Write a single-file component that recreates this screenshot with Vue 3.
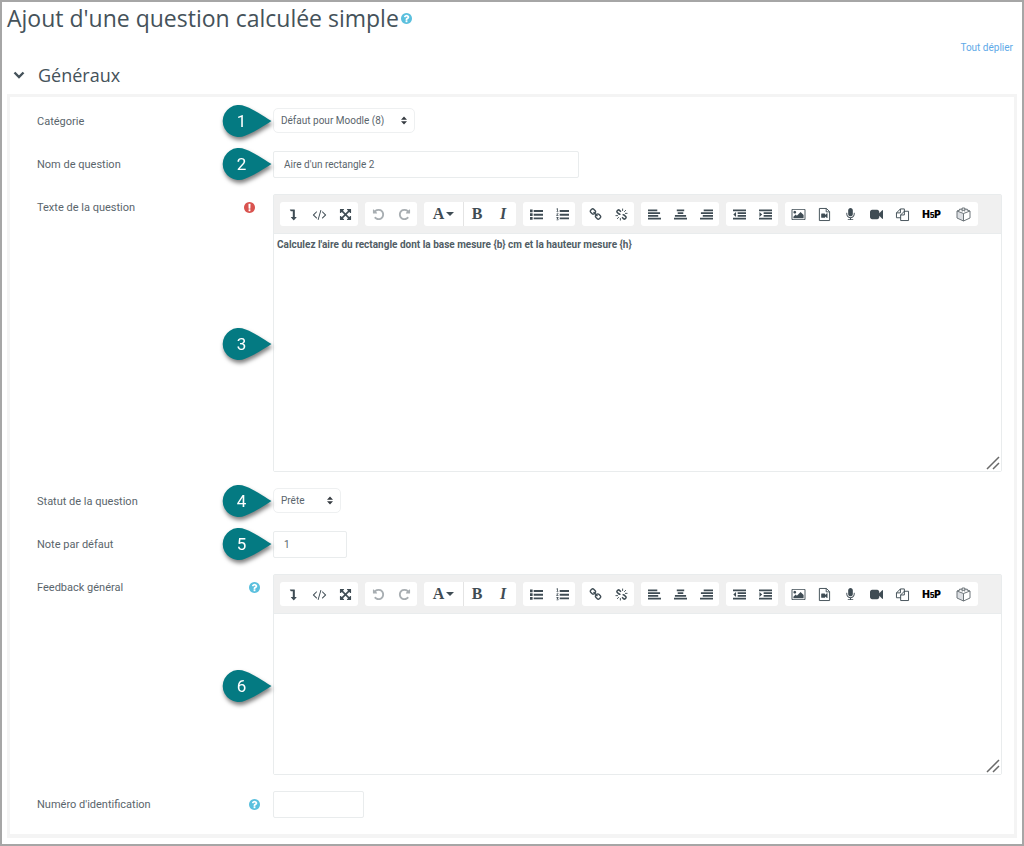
<script setup>
import { ref } from 'vue'

const category = ref('Défaut pour Moodle (8)')
const name = ref("Aire d'un rectangle 2")
const questionText = ref("Calculez l'aire du rectangle dont la base mesure {b} cm et la hauteur mesure {h}")
const status = ref('Prête')
const mark = ref('1')
const feedback = ref('')
const idNumber = ref('')
const open = ref(true)

const HELP = 'M1024 1376v-192q0-14-9-23t-23-9h-192q-14 0-23 9t-9 23v192q0 14 9 23t23 9h192q14 0 23-9t9-23zm256-672q0-88-55.5-163t-138.5-116-170-41q-243 0-371 213-15 24 8 42l132 100q7 6 19 6 16 0 25-12 53-68 86-92 34-24 86-24 48 0 85.5 26t37.5 59q0 38-20 61t-68 45q-63 28-115.5 86.5t-52.5 125.5v36q0 14 9 23t23 9h192q14 0 23-9t9-23q0-19 21.5-49.5t54.5-49.5q32-18 49-28.5t46-35 44.5-48 28-60.5 12.5-81zm384 192q0 209-103 385.5t-279.5 279.5-385.5 103-385.5-103-279.5-279.5-103-385.5 103-385.5 279.5-279.5 385.5-103 385.5 103 279.5 279.5 103 385.5z'
const REQUIRED = 'M896 128q209 0 385.5 103t279.5 279.5 103 385.5-103 385.5-279.5 279.5-385.5 103-385.5-103-279.5-279.5-103-385.5 103-385.5 279.5-279.5 385.5-103zm128 1247v-190q0-14-9-23.5t-22-9.5h-192q-13 0-23 10t-10 23v190q0 13 10 23t23 10h192q13 0 22-9.5t9-23.5zm-2-344l18-621q0-12-10-18-10-8-24-8h-220q-14 0-24 8-10 6-10 18l17 621q0 10 10 17.5t24 7.5h185q14 0 23.5-7.5t10.5-17.5z'
const REDO = 'M1664 256v448q0 26-19 45t-45 19h-448q-42 0-59-40-17-39 14-69l138-138q-148-137-349-137-104 0-198.5 40.5t-163.5 109.5-109.5 163.5-40.5 198.5 40.5 198.5 109.5 163.5 163.5 109.5 198.5 40.5q119 0 225-52t179-147q7-10 23-12 15 0 25 9l137 138q9 8 9.5 20.5t-7.5 22.5q-109 132-264 204.5t-327 72.5q-156 0-298-61t-245-164-164-245-61-298 61-298 164-245 245-164 298-61q147 0 284.5 55.5t244.5 156.5l130-129q29-31 70-14 39 17 39 59z'

const ICONS = {
  toggle: { d: 'M420 192h600q60 0 60 60v976h230q50 0 20 50l-370 410q-30 34-60 0l-370-410q-30-50 20-50h250v-776h-230q-20 0-34-16l-150-180q-20-44 34-64z' },
  html: { d: 'M553 1399l-50 50q-10 10-23 10t-23-10l-466-466q-10-10-10-23t10-23l466-466q10-10 23-10t23 10l50 50q10 10 10 23t-10 23l-393 393 393 393q10 10 10 23t-10 23zm591-1067l-373 1291q-4 13-15.5 19.5t-23.5 2.5l-62-17q-13-4-19.5-15.5t-2.5-24.5l373-1291q4-13 15.5-19.5t23.5-2.5l62 17q13 4 19.5 15.5t2.5 24.5zm657 651l-466 466q-10 10-23 10t-23-10l-50-50q-10-10-10-23t10-23l393-393-393-393q-10-10-10-23t10-23l50-50q10-10 23-10t23 10l466 466q10 10 10 23t-10 23z' },
  expand: { d: 'M1411 541l-355 355 355 355 144-144q29-31 70-14 39 17 39 59v448q0 26-19 45t-45 19h-448q-42 0-59-40-17-39 14-69l144-144-355-355-355 355 144 144q31 30 14 69-17 40-59 40h-448q-26 0-45-19t-19-45v-448q0-42 40-59 39-17 69 14l144 144 355-355-355-355-144 144q-19 19-45 19-12 0-24-5-40-17-40-59v-448q0-26 19-45t45-19h448q42 0 59 40 17 39-14 69l-144 144 355 355 355-355-144-144q-31-30-14-69 17-40 59-40h448q26 0 45 19t19 45v448q0 42-39 59-13 5-25 5-26 0-45-19z' },
  undo: { d: REDO, flip: true },
  redo: { d: REDO },
  bullets: { d: 'M0 220h360v360h-360zM0 732h360v360h-360zM0 1244h360v360h-360zM512 280h1280v260h-1280zM512 792h1280v260h-1280zM512 1304h1280v260h-1280z' },
  numbers: { d: 'M512 280h1280v260h-1280zM512 792h1280v260h-1280zM512 1304h1280v260h-1280zM60 110l120-60h70v400h90v80h-290v-80h90v-280l-80 40zM50 720q140-120 260-30 80 110-60 220l-70 60h160v90h-310v-80l200-190q30-70-30-80-50 0-90 50zM50 1250h290v80l-100 110q110 20 110 130-10 130-170 130-90 0-140-50l40-80q60 50 110 40 60-10 50-60-20-50-130-40v-70l90-100h-150z' },
  link: { d: 'M1520 1216q0-40-28-68l-208-208q-28-28-68-28-42 0-72 32 3 3 19 18.5t21.5 21.5 15 19 13 25.5 3.5 27.5q0 40-28 68t-68 28q-15 0-27.5-3.5t-25.5-13-19-15-21.5-21.5-18.5-19q-33 31-33 73 0 40 28 68l206 207q27 27 68 27 40 0 68-26l147-146q28-28 28-67zm-703-705q0-40-28-68l-206-207q-28-28-68-28-39 0-68 27l-147 146q-28 28-28 67 0 40 28 68l208 208q27 27 68 27 42 0 72-31-3-3-19-18.5t-21.5-21.5-15-19-13-25.5-3.5-27.5q0-40 28-68t68-28q15 0 27.5 3.5t25.5 13 19 15 21.5 21.5 18.5 19q33-31 33-73zm895 705q0 120-85 203l-147 146q-83 83-203 83-121 0-204-85l-206-207q-83-83-83-203 0-123 88-209l-88-88q-86 88-208 88-120 0-204-84l-208-208q-84-84-84-204t85-203l147-146q83-83 203-83 121 0 204 85l206 207q83 83 83 203 0 123-88 209l88 88q86-88 208-88 120 0 204 84l208 208q84 84 84 204z' },
  unlink: { s: 'M820 520L590 290Q500 220 410 290L290 410Q220 500 290 590L520 810Q610 890 740 800M970 1270L1200 1500Q1290 1570 1380 1500L1500 1380Q1570 1290 1500 1200L1270 980Q1180 900 1050 990', thin: 'M1050 80v330M1260 530l240-240M1380 740h340M740 1390v330M530 1260l-240 240M410 1050h-340' },
  left: { d: 'M0 192h1280v256h-1280zM0 576h1664v256h-1664zM0 960h1408v256h-1408zM0 1344h1792v256h-1792z' },
  center: { d: 'M384 192h1024v256h-1024zM128 960h1536v256h-1536zM512 576h768v256h-768zM0 1344h1792v256h-1792z' },
  right: { d: 'M512 192h1280v256h-1280zM128 576h1664v256h-1664zM384 960h1408v256h-1408zM0 1344h1792v256h-1792z' },
  outdent: { d: 'M0 192h1792v256h-1792zM640 576h1152v256h-1152zM640 960h1152v256h-1152zM0 1344h1792v256h-1792zM420 560v680l-380-340z' },
  indent: { d: 'M0 192h1792v256h-1792zM640 576h1152v256h-1152zM640 960h1152v256h-1152zM0 1344h1792v256h-1792zM60 560v680l380-340z' },
  image: { d: 'M576 576q0 80-56 136t-136 56-136-56-56-136 56-136 136-56 136 56 56 136zm1024 384v448h-1408v-192l320-320 160 160 512-512zm96-704h-1600q-13 0-22.5 9.5t-9.5 22.5v1216q0 13 9.5 22.5t22.5 9.5h1600q13 0 22.5-9.5t9.5-22.5v-1216q0-13-9.5-22.5t-22.5-9.5zm160 32v1216q0 66-47 113t-113 47h-1600q-66 0-113-47t-47-113v-1216q0-66 47-113t113-47h1600q66 0 113 47t47 113z' },
  media: { d: 'M440 850q0-80 80-80h380q80 0 80 80v110l260-220h70v640h-70l-260-220v110q0 80-80 80h-380q-80 0-80-80z', thin: 'M190 64h980l430 430v1234h-1410zM1130 64v470h470' },
  mic: { d: 'M1472 704v128q0 221-147.5 384.5t-364.5 187.5v132h256q26 0 45 19t19 45-19 45-45 19h-640q-26 0-45-19t-19-45 19-45 45-19h256v-132q-217-24-364.5-187.5t-147.5-384.5v-128q0-26 19-45t45-19 45 19 19 45v128q0 185 131.5 316.5t316.5 131.5 316.5-131.5 131.5-316.5v-128q0-26 19-45t45-19 45 19 19 45zm-256-384v512q0 132-94 226t-226 94-226-94-94-226v-512q0-132 94-226t226-94 226 94 94 226z' },
  video: { d: 'M1792 352v1088q0 42-39 59-13 5-25 5-27 0-45-19l-403-403v166q0 119-84.5 203.5t-203.5 84.5h-704q-119 0-203.5-84.5t-84.5-203.5v-704q0-119 84.5-203.5t203.5-84.5h704q119 0 203.5 84.5t84.5 203.5v165l403-402q18-19 45-19 12 0 25 5 39 17 39 59z' },
  files: { thin: 'M640 1344h-576v-672l544-544h544v400M608 128v544h-544M1152 448h576v1280h-1088v-768zM1152 448v512h-512' },
}

const GROUPS = [
  ['toggle', 'html', 'expand'],
  ['undo', 'redo'],
  ['font', 'bold', 'italic'],
  ['bullets', 'numbers'],
  ['link', 'unlink'],
  ['left', 'center', 'right'],
  ['outdent', 'indent'],
  ['image', 'media', 'mic', 'video', 'files', 'h5p', 'box'],
]

const rows = [
  { id: 'category', label: 'Catégorie', n: 1, type: 'select', model: category },
  { id: 'name', label: 'Nom de question', n: 2, type: 'text', model: name },
  { id: 'text', label: 'Texte de la question', n: 3, type: 'editor', model: questionText, mark: 'required' },
  { id: 'status', label: 'Statut de la question', n: 4, type: 'select', model: status },
  { id: 'mark', label: 'Note par défaut', n: 5, type: 'text', model: mark },
  { id: 'feedback', label: 'Feedback général', n: 6, type: 'editor', model: feedback, mark: 'help' },
  { id: 'idnumber', label: "Numéro d'identification", type: 'text', model: idNumber, mark: 'help' },
]
</script>

<template>
  <main class="page">
    <h1 class="title">
      Ajout d'une question calculée simple<button class="mark help" type="button" aria-label="Aide"><svg viewBox="128 128 1536 1536"><path :d="HELP" /></svg></button>
    </h1>
    <div class="expand-all"><a href="#">Tout déplier</a></div>
    <h2 class="section-title">
      <button class="section-toggle" type="button" :aria-expanded="open" @click="open = !open">
        <svg viewBox="0 0 12 8"><path d="M1.500 1.500L6 6l4.500-4.500" /></svg>
        Généraux
      </button>
    </h2>

    <form v-show="open" class="fieldset" @submit.prevent>
      <div v-for="row in rows" :key="row.id" class="row">
        <div class="row-label">
          <label :for="row.id">{{ row.label }}</label>
          <span v-if="row.mark === 'required'" class="mark required"><svg viewBox="128 128 1536 1536"><path :d="REQUIRED" /></svg></span>
          <button v-if="row.mark === 'help'" class="mark help" type="button" aria-label="Aide"><svg viewBox="128 128 1536 1536"><path :d="HELP" /></svg></button>
        </div>

        <div class="row-control" :class="'control-' + row.type">
          <div v-if="row.type === 'select'" class="select-wrap" :class="'field-' + row.id">
            <select :id="row.id" v-model="row.model.value">
              <option>{{ row.model.value }}</option>
            </select>
            <svg class="caret" viewBox="0 0 6 8"><path d="M3 0l3 3.300H0zM3 8l3-3.300H0z" /></svg>
          </div>
          <input v-else-if="row.type === 'text'" :id="row.id" v-model="row.model.value" class="text-input" :class="'field-' + row.id" type="text" />
          <div v-else class="editor">
            <div class="toolbar">
              <div v-for="(group, g) in GROUPS" :key="g" class="group">
                <button v-for="key in group" :key="key" type="button" class="tool" :class="'tool-' + key" :aria-label="key">
                  <span v-if="key === 'font'" class="glyph">A<i class="drop"></i></span>
                  <span v-else-if="key === 'bold'" class="glyph">B</span>
                  <span v-else-if="key === 'italic'" class="glyph slanted">I</span>
                  <span v-else-if="key === 'h5p'" class="h5p">H<small>5</small>P</span>
                  <svg v-else-if="key === 'box'" class="box" viewBox="0 0 15 15">
                    <path class="side" d="M1 4l6.500 2.500v7.500L1 11z" />
                    <path d="M1 4l6.500-2.500L14 4v7l-6.500 3L1 11zM1 4l6.500 2.500L14 4M7.500 6.500V14" />
                    <path class="stud" d="M3.500 3.400V2.200h2.500v1.300M8.800 3.400V2.200h2.500v1.300M6.200 4.500V3.300h2.500v1.200M6.200 2V1h2.500v1" />
                  </svg>
                  <svg v-else class="icon" :class="{ flip: ICONS[key].flip }" viewBox="0 0 1792 1792">
                    <path v-if="ICONS[key].d" :d="ICONS[key].d" />
                    <path v-if="ICONS[key].s" class="thick" :d="ICONS[key].s" />
                    <path v-if="ICONS[key].thin" class="thin" :d="ICONS[key].thin" />
                  </svg>
                </button>
              </div>
            </div>
            <textarea :id="row.id" v-model="row.model.value" :class="'area-' + row.id"></textarea>
            <svg class="grip" viewBox="0 0 14 14"><path d="M1 13L13 1M7 13l6-6" /></svg>
          </div>
          <span v-if="row.n" class="callout"><svg viewBox="0 0 50 34"><path d="M49.500 17C40 11 31 5 23 2.300A16 16 0 1 0 23 31.700C31 29 40 23 49.500 17z" /></svg><b>{{ row.n }}</b></span>
        </div>
      </div>
    </form>
  </main>
</template>

<style>
body { background: #fff; }
</style>

<style scoped>
* { box-sizing: border-box; }
button { padding: 0; border: 0; background: none; font: inherit; color: inherit; cursor: pointer; }
svg { display: block; }
.page { border: 2px solid #a6a6a6; padding: 0 5px 6px; font-family: Roboto, "Liberation Sans", sans-serif; font-size: 11px; color: #5a656c; min-height: 100vh; }
.title { display: flex; align-items: center; gap: 2px; margin: 0; font: 400 23px/32px "Open Sans", sans-serif; color: #45525a; }
.mark { flex: none; width: 11px; height: 11px; }
.mark svg { width: 11px; height: 11px; }
.help { fill: #5bc0de; }
.required { fill: #d9534f; margin-right: 5px; }
.expand-all { text-align: right; padding: 6px 4px 0 0; font-size: 10px; line-height: 16px; }
.expand-all a { color: #5ea9e8; text-decoration: none; }
.section-title { margin: 6px 0; font: 400 18px/26px "Open Sans", sans-serif; color: #45525a; }
.section-toggle { display: flex; align-items: center; gap: 13px; padding-left: 6px; }
.section-toggle svg { width: 12px; height: 8px; fill: none; stroke: #45525a; stroke-width: 2.4; }

.fieldset { display: flex; flex-direction: column; gap: 16px; border: 3px solid #f4f4f4; border-bottom-width: 4px; padding: 11px 12px 16px 27px; }
.row { display: grid; grid-template-columns: 236px 1fr; min-height: 27px; }
.row-label { display: flex; justify-content: space-between; align-items: center; height: 27px; padding-right: 13px; }
.row-control { position: relative; }
.select-wrap { position: relative; height: 25px; }
select { appearance: none; width: 100%; height: 25px; padding: 0 7px; border: 1px solid #eef0f1; border-radius: 5px; background: #fff; font: inherit; font-size: 10px; color: inherit; }
.caret { position: absolute; right: 8px; top: 8px; width: 6px; height: 9px; fill: #343a40; pointer-events: none; }
.text-input { display: block; height: 27px; padding: 0 10px; border: 1px solid #e9eced; border-radius: 2px; background: #fff; font: inherit; font-size: 10px; color: inherit; }
.field-category { width: 142px; }
.field-status { width: 68px; }
.field-name { width: 42%; }
.field-mark { width: 74px; }
.field-idnumber { width: 91px; }

.editor { position: relative; border: 1px solid #e9eced; border-radius: 2px; }
.toolbar { display: flex; flex-wrap: wrap; gap: 7px; padding: 7px 6px; background: #f0f0f0; border-bottom: 1px solid #e9eced; }
.group { display: flex; height: 24px; background: #fff; border-radius: 3px; }
.tool { display: flex; align-items: center; justify-content: center; width: 26px; height: 24px; color: #3f4c54; }
.tool-font { width: 40px; border-right: 1px solid #e4e4e4; }
.tool-h5p { width: 33px; }
.tool-box { width: 30px; }
.tool-undo, .tool-redo { color: #a8aeb2; }
.icon { width: 13px; height: 13px; fill: currentColor; overflow: visible; }
.flip { transform: scaleX(-1); }
.thick { fill: none; stroke: currentColor; stroke-width: 210; }
.thin { fill: none; stroke: currentColor; stroke-width: 130; }
.glyph { display: flex; align-items: center; gap: 2px; font: 700 16px/24px "Liberation Serif", serif; }
.slanted { font-style: italic; }
.drop { border: 4px solid transparent; border-top-color: currentColor; border-bottom: 0; }
.h5p { padding-top: 2px; font: 900 10px/22px Inter, Roboto, sans-serif; color: #000; }
.h5p small { font-size: 7px; }
.box { width: 15px; height: 15px; fill: none; stroke: #6d757a; }
.side { fill: #dcdfe3; stroke: none; }
.stud { fill: #fff; }
textarea { display: block; width: 100%; margin: 0; padding: 4px 3px; border: 0; background: #fff; resize: none; font: 700 10px/14px Roboto, sans-serif; color: #515d65; outline: 0; }
.area-text { height: 237px; }
.area-feedback { height: 160px; }
.grip { position: absolute; right: 1px; bottom: 1px; width: 14px; height: 14px; stroke: #6a6a6a; stroke-width: 1.5; pointer-events: none; }

.callout { position: absolute; left: -51px; top: 50%; width: 50px; height: 34px; margin-top: -18px; filter: drop-shadow(1px 3px 2px rgba(0, 0, 0, 0.5)); }
.control-editor .callout { top: calc(50% + 12px); }
.callout svg { width: 50px; height: 34px; fill: #047a82; }
.callout b { position: absolute; left: 0; top: 0; width: 39px; font: 400 17px/34px Roboto, sans-serif; text-align: center; color: #fff; }
</style>
